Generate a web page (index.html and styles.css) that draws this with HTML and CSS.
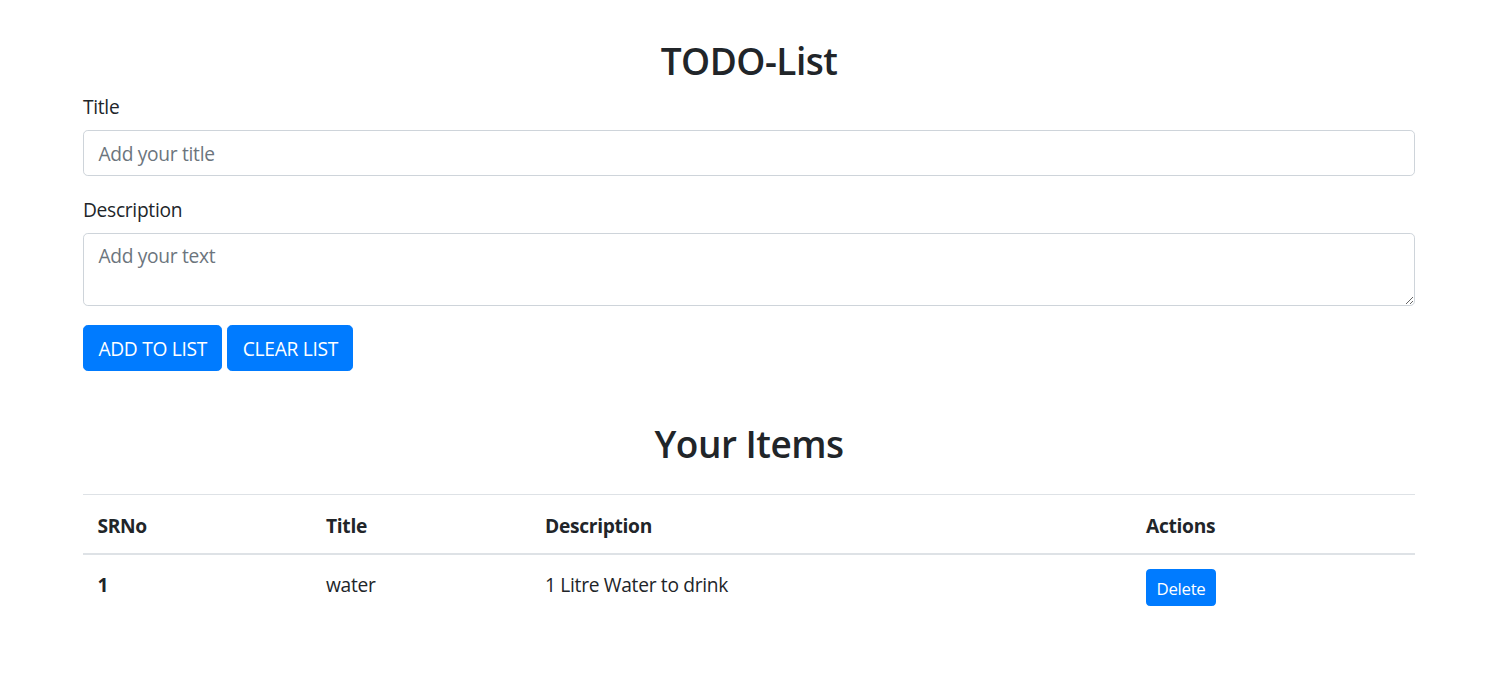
FILE: index.html
```html
<!DOCTYPE html>
<html lang="en">
<head>
<meta charset="utf-8">
<title>TODO-List</title>
<link rel="stylesheet" href="styles.css">
</head>
<body>
<div class="container">
  <h2 class="heading">TODO-List</h2>
  <div class="form-group">
    <label class="label" for="title">Title</label>
    <input class="form-control" id="title" type="text" placeholder="Add your title">
  </div>
  <div class="form-group">
    <label class="label" for="desc">Description</label>
    <textarea class="form-control textarea" id="desc" placeholder="Add your text"></textarea>
  </div>
  <div class="btn-row">
    <button class="btn">ADD TO LIST</button>
    <button class="btn">CLEAR LIST</button>
  </div>
  <h2 class="heading items-heading">Your Items</h2>
  <table class="table">
    <thead>
      <tr>
        <th class="c1">SRNo</th>
        <th class="c2">Title</th>
        <th class="c3">Description</th>
        <th class="c4">Actions</th>
      </tr>
    </thead>
    <tbody>
      <tr>
        <th>1</th>
        <td>water</td>
        <td>1 Litre Water to drink</td>
        <td><button class="btn btn-sm">Delete</button></td>
      </tr>
    </tbody>
  </table>
</div>
</body>
</html>
```
FILE: styles.css
```css
* { box-sizing: border-box; }
html, body { margin: 0; padding: 0; background: #fff; }
body {
  font-family: "Open Sans", "Noto Sans", "Liberation Sans", sans-serif;
  font-size: 19.2px;
  line-height: 1.5;
  letter-spacing: -0.3px;
  color: #212529;
}
.container {
  width: 1332px;
  margin-left: 83px;
  padding-top: 36px;
}
.heading {
  margin: 0 0 9.6px;
  font-size: 37px;
  height: 46px;
  padding-top: 3px;
  font-weight: 600;
  line-height: 43px;
  letter-spacing: -0.5px;
  text-align: center;
}
.form-group { margin-bottom: 19.2px; }
.label {
  display: inline-block;
  margin-bottom: 9.6px;
  padding-top: 1px;
  height: 28.8px;
}
.form-control {
  display: block;
  width: 100%;
  height: 45.6px;
  padding: 6.4px 14.4px 4.4px;
  font-family: inherit;
  font-size: 19.2px;
  line-height: 1.5;
  letter-spacing: -0.3px;
  color: #495057;
  background: #fff;
  border: 1px solid #ced4da;
  border-radius: 4.8px;
  outline: none;
}
.form-control::placeholder { color: #6c757d; opacity: 1; }
.textarea { height: 73px; resize: vertical; padding-top: 7.4px; }
.btn-row { display: flex; gap: 5px; }
.btn {
  display: inline-block;
  height: 45.6px;
  padding: 8px 14.4px 6.4px;
  font-family: inherit;
  font-size: 19.2px;
  line-height: 1.5;
  letter-spacing: -0.3px;
  color: #fff;
  background: #007bff;
  border: 1px solid #007bff;
  border-radius: 4.8px;
  cursor: pointer;
}
.btn-sm {
  height: 36.8px;
  padding: 5.4px 9.6px 4.2px;
  margin-top: -2px;
  font-size: 16.8px;
  border-radius: 3.84px;
}
.items-heading { margin-top: 48.4px; margin-bottom: 29px; }
.table {
  width: 100%;
  border-collapse: collapse;
  color: #212529;
}
.table th, .table td {
  padding: 16.4px 14.4px 12.4px;
  text-align: left;
  vertical-align: top;
  border-top: 1px solid #dee2e6;
}
.table th { font-weight: 700; }
.table thead th { border-bottom: 2px solid #dee2e6; vertical-align: bottom; }
.c1 { width: 228.6px; }
.c2 { width: 219px; }
.c3 { width: 601px; }
.c4 { width: 283.4px; }
```
